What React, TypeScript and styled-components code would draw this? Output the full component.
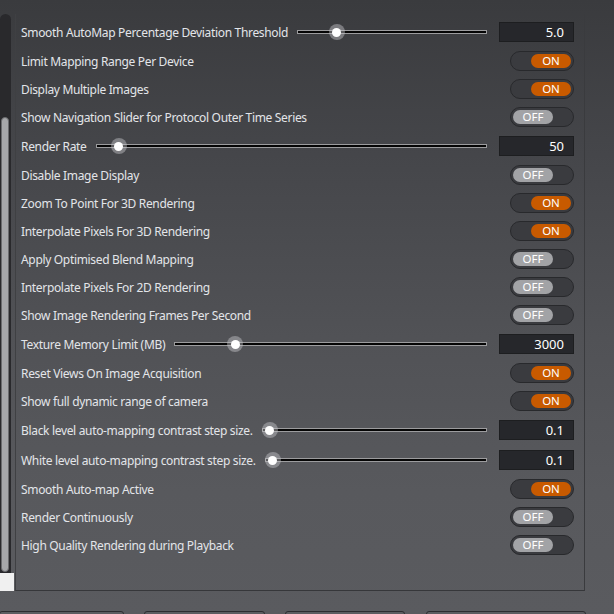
import React from "react";
import styled, { createGlobalStyle } from "styled-components";

const Global = createGlobalStyle`
  html, body { margin: 0; padding: 0; background: #4a4b4f; }
  body { font-family: "Noto Sans", "Open Sans", sans-serif; }
  * { box-sizing: border-box; }
`;

const Page = styled.div`
  width: 614px;
  height: 614px;
  overflow: hidden;
  display: flex;
  flex-direction: column;
  background: linear-gradient(180deg, #3a3b3e 0%, #45464a 25%, #515256 55%, #58595d 80%, #5a5b5f 100%);
`;

const Main = styled.div`
  display: flex;
  padding-top: 14px;
  height: 591px;
  flex-shrink: 0;
`;

const ScrollCol = styled.div`
  width: 15px;
  display: flex;
  flex-direction: column;
`;

const Track = styled.div`
  width: 11px;
  flex: 1;
  background: #29292c;
  border-radius: 6px 6px 0 0;
  padding: 103px 2px 1px 1px;
  display: flex;
`;

const Thumb = styled.div`
  flex: 1;
  background: #a6a7aa;
  border: 1px solid #6a6b6e;
  border-radius: 4px;
`;

const Corner = styled.div`
  width: 14px;
  height: 18px;
  background: #f0f0f0;
`;

const Panel = styled.div`
  width: 570px;
  border-left: 1px solid #3f4043;
  border-right: 1px solid #3a3b3e;
  border-bottom: 1px solid #36373a;
  padding: 3px 10px 0 5px;
  display: flex;
  flex-direction: column;
`;

const Row = styled.div<{ $tall?: boolean }>`
  height: ${(p) => (p.$tall ? 30 : 28)}px;
  flex-shrink: 0;
  display: flex;
  align-items: center;
`;

const Label = styled.span`
  font-size: 12px;
  color: #e3e5e9;
  white-space: nowrap;
  letter-spacing: -0.33px;
`;

const Spacer = styled.div`
  flex: 1;
`;

const SliderWrap = styled.div`
  flex: 1;
  position: relative;
  height: 18px;
  margin: 0 12px 0 9px;
  display: flex;
  align-items: center;
`;

const SliderTrack = styled.div`
  width: 100%;
  height: 4px;
  background: #050505;
  border: 1px solid #9c9c9e;
`;

const Knob = styled.div`
  position: absolute;
  top: 1px;
  width: 16px;
  height: 16px;
  margin-left: -8px;
  border-radius: 50%;
  background: rgba(200, 200, 204, 0.45);
  display: flex;
  align-items: center;
  justify-content: center;
  &::after {
    content: "";
    width: 9px;
    height: 9px;
    border-radius: 50%;
    background: #ffffff;
  }
`;

const ValueBox = styled.div`
  width: 75px;
  height: 20px;
  background: #26272b;
  border: 1px solid #1d1e20;
  color: #ffffff;
  font-size: 13px;
  text-align: right;
  padding-right: 9px;
  line-height: 18px;
`;

const ToggleOuter = styled.div<{ $on: boolean }>`
  width: 64px;
  height: 20px;
  border-radius: 10px;
  background: #3a3b3f;
  border: 1px solid #28292c;
  padding: 2px;
  display: flex;
  justify-content: ${(p) => (p.$on ? "flex-end" : "flex-start")};
`;

const ToggleKnob = styled.div<{ $on: boolean }>`
  width: 40px;
  height: 14px;
  border-radius: 7px;
  background: ${(p) => (p.$on ? "#c85a00" : "#a2a3a6")};
  color: #ffffff;
  font-size: 11.5px;
  line-height: 14px;
  text-align: center;
`;

const Bottom = styled.div`
  flex: 1;
  display: flex;
  align-items: flex-start;
  padding-top: 20px;
  overflow: hidden;
`;

const Btn = styled.div<{ $w: number; $ml: number }>`
  width: ${(p) => p.$w}px;
  margin-left: ${(p) => p.$ml}px;
  height: 10px;
  flex-shrink: 0;
  border: 1px solid #2c2d30;
  border-radius: 3px;
  background: #5c5d61;
`;

type Item =
  | { kind: "slider"; label: string; value: string; pos: number }
  | { kind: "toggle"; label: string; on: boolean };

const items: Item[] = [
  { kind: "slider", label: "Smooth AutoMap Percentage Deviation Threshold", value: "5.0", pos: 0.183 },
  { kind: "toggle", label: "Limit Mapping Range Per Device", on: true },
  { kind: "toggle", label: "Display Multiple Images", on: true },
  { kind: "toggle", label: "Show Navigation Slider for Protocol Outer Time Series", on: false },
  { kind: "slider", label: "Render Rate", value: "50", pos: 0.04 },
  { kind: "toggle", label: "Disable Image Display", on: false },
  { kind: "toggle", label: "Zoom To Point For 3D Rendering", on: true },
  { kind: "toggle", label: "Interpolate Pixels For 3D Rendering", on: true },
  { kind: "toggle", label: "Apply Optimised Blend Mapping", on: false },
  { kind: "toggle", label: "Interpolate Pixels For 2D Rendering", on: false },
  { kind: "toggle", label: "Show Image Rendering Frames Per Second", on: false },
  { kind: "slider", label: "Texture Memory Limit (MB)", value: "3000", pos: 0.178 },
  { kind: "toggle", label: "Reset Views On Image Acquisition", on: true },
  { kind: "toggle", label: "Show full dynamic range of camera", on: true },
  { kind: "slider", label: "Black level auto-mapping contrast step size.", value: "0.1", pos: 0 },
  { kind: "slider", label: "White level auto-mapping contrast step size.", value: "0.1", pos: 0 },
  { kind: "toggle", label: "Smooth Auto-map Active", on: true },
  { kind: "toggle", label: "Render Continuously", on: false },
  { kind: "toggle", label: "High Quality Rendering during Playback", on: false },
];

export default function App() {
  return (
    <Page>
      <Global />
      <Main>
        <ScrollCol>
          <Track>
            <Thumb />
          </Track>
          <Corner />
        </ScrollCol>
        <Panel>
          {items.map((it, i) =>
            it.kind === "slider" ? (
              <Row key={i} $tall>
                <Label>{it.label}</Label>
                <SliderWrap>
                  <SliderTrack />
                  <Knob style={{ left: `calc(8px + (100% - 16px) * ${it.pos})` }} />
                </SliderWrap>
                <ValueBox>{it.value}</ValueBox>
              </Row>
            ) : (
              <Row key={i}>
                <Label>{it.label}</Label>
                <Spacer />
                <ToggleOuter $on={it.on}>
                  <ToggleKnob $on={it.on}>{it.on ? "ON" : "OFF"}</ToggleKnob>
                </ToggleOuter>
              </Row>
            )
          )}
        </Panel>
      </Main>
      <Bottom>
        <Btn $w={125} $ml={-1} />
        <Btn $w={121} $ml={20} />
        <Btn $w={120} $ml={20} />
        <Btn $w={160} $ml={21} />
      </Bottom>
    </Page>
  );
}
